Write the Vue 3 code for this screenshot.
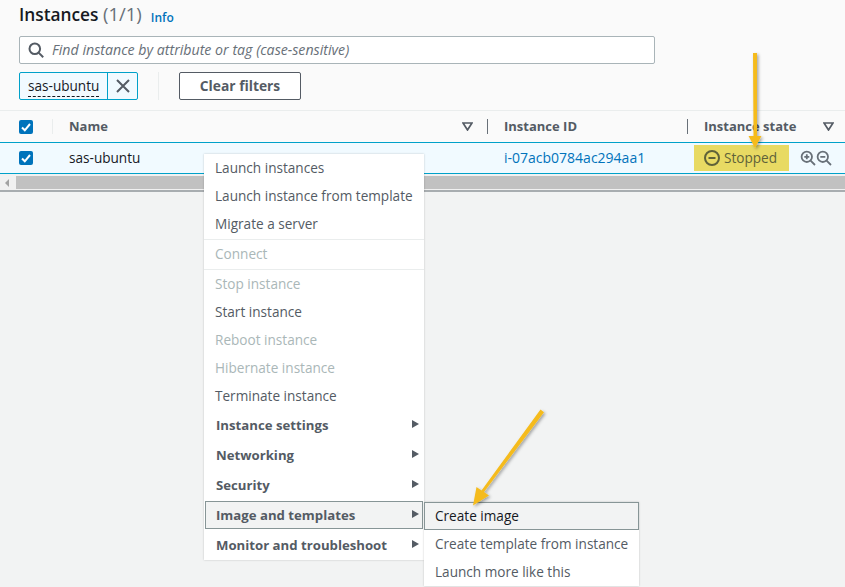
<script setup>
const groups = [
  [
    { label: 'Launch instances' },
    { label: 'Launch instance from template' },
    { label: 'Migrate a server' }
  ],
  [{ label: 'Connect', off: true }],
  [
    { label: 'Stop instance', off: true },
    { label: 'Start instance' },
    { label: 'Reboot instance', off: true },
    { label: 'Hibernate instance', off: true },
    { label: 'Terminate instance' }
  ]
]
const subMenus = [
  { label: 'Instance settings' },
  { label: 'Networking' },
  { label: 'Security' },
  { label: 'Image and templates', open: true },
  { label: 'Monitor and troubleshoot' }
]
const flyout = [
  { label: 'Create image', active: true },
  { label: 'Create template from instance' },
  { label: 'Launch more like this' }
]
</script>

<template>
  <div class="page">
    <header class="top">
      <div class="title-row">
        <h1>Instances <span class="count">(1/1)</span></h1>
        <a class="info">Info</a>
      </div>
      <div class="search">
        <svg class="search-icon" width="16" height="16" viewBox="0 0 16 16" fill="none" stroke="#545b64" stroke-width="2">
          <circle cx="6.800" cy="6.800" r="5.300" />
          <path d="M10.600 10.600l4.600 4.600" />
        </svg>
        <span class="search-text">Find instance by attribute or tag (case-sensitive)</span>
      </div>
      <div class="filter-row">
        <div class="chip">
          <span class="chip-text"><span>sas-ubuntu</span></span>
          <span class="chip-x">
            <svg width="14" height="14" viewBox="0 0 14 14" stroke="#545b64" stroke-width="2" fill="none">
              <path d="M1 1l12 12M13 1L1 13" />
            </svg>
          </span>
        </div>
        <span class="filter-sep"></span>
        <button class="clear" type="button">Clear filters</button>
      </div>
    </header>

    <div class="thead">
      <span class="cell-check">
        <span class="check">
          <svg width="14" height="14" viewBox="0 0 14 14" fill="none" stroke="#fff" stroke-width="2"><path d="M3 7.500l2.800 2.800L11 4" /></svg>
        </span>
      </span>
      <span class="cell-name with-sep-light">Name</span>
      <span class="sort"><svg width="11" height="9" viewBox="0 0 11 9"><path d="M1 1h9L5.500 8z" fill="none" stroke="#545b64" stroke-width="1.700" /></svg></span>
      <span class="cell-id with-sep">Instance ID</span>
      <span class="cell-state with-sep">Instance state</span>
      <span class="sort"><svg width="11" height="9" viewBox="0 0 11 9"><path d="M1 1h9L5.500 8z" fill="none" stroke="#545b64" stroke-width="1.700" /></svg></span>
    </div>

    <div class="trow">
      <span class="cell-check">
        <span class="check">
          <svg width="14" height="14" viewBox="0 0 14 14" fill="none" stroke="#fff" stroke-width="2"><path d="M3 7.500l2.800 2.800L11 4" /></svg>
        </span>
      </span>
      <span class="cell-name row-text">sas-ubuntu</span>
      <span class="cell-id row-text"><a>i-07acb0784ac294aa1</a></span>
      <span class="cell-state">
        <span class="state">
          <svg width="16" height="16" viewBox="0 0 16 16" fill="none" stroke="#5f6239" stroke-width="2">
            <circle cx="8" cy="8" r="7" />
            <path d="M4.500 8h7" />
          </svg>
          <span class="row-text">Stopped</span>
        </span>
        <span class="zooms">
          <svg width="16" height="16" viewBox="0 0 16 16" fill="none" stroke="#687078" stroke-width="1.800">
            <circle cx="6.800" cy="6.800" r="5.200" />
            <path d="M10.600 10.600l4.400 4.400M4.300 6.800h5M6.800 4.300v5" />
          </svg>
          <svg width="16" height="16" viewBox="0 0 16 16" fill="none" stroke="#687078" stroke-width="1.800">
            <circle cx="6.800" cy="6.800" r="5.200" />
            <path d="M10.600 10.600l4.400 4.400M4.300 6.800h5" />
          </svg>
        </span>
      </span>
    </div>

    <div class="scrollbar">
      <span class="scroll-arrow"></span>
      <span class="scroll-thumb"></span>
    </div>
    <div class="bottom"></div>

    <nav class="menu">
      <div v-for="(group, i) in groups" :key="i" class="menu-group">
        <div v-for="item in group" :key="item.label" class="menu-item" :class="{ off: item.off }">{{ item.label }}</div>
      </div>
      <div class="sub-list">
        <div v-for="item in subMenus" :key="item.label" class="sub-item" :class="{ open: item.open }">
          {{ item.label }}
          <span class="sub-arrow"></span>
        </div>
      </div>
    </nav>

    <nav class="flyout">
      <div v-for="item in flyout" :key="item.label" class="fly-item" :class="{ active: item.active }">{{ item.label }}</div>
    </nav>

    <!-- annotation arrows -->
    <svg class="arrows" width="845" height="587" viewBox="0 0 845 587">
      <defs>
        <filter id="arrow-shadow" x="-50%" y="-50%" width="200%" height="200%">
          <feDropShadow dx="1.500" dy="1.500" stdDeviation="1.500" flood-color="#000" flood-opacity="0.350" />
        </filter>
      </defs>
      <g filter="url(#arrow-shadow)" fill="#f5bb1c" stroke="none">
        <path d="M753 53h4v83h4.500l-6.500 12-6.500-12h5z" />
        <path d="M540.500 409.500l3.500 2.800-60 79.700 5 3.500-16 10 3.500-18.500 5 3.500z" />
      </g>
    </svg>
  </div>
</template>

<style scoped>
.page {
  position: relative;
  width: 845px;
  height: 587px;
  overflow: hidden;
  display: flex;
  flex-direction: column;
  background: #f2f3f3;
  font-family: "Open Sans", "Noto Sans", sans-serif;
  font-size: 13.600px;
  color: #16191f;
}

.top {
  height: 110px;
  box-sizing: border-box;
  background: #fafafa;
  padding: 0 190px 10px 19px;
}

.title-row {
  height: 26px;
  display: flex;
  align-items: center;
  gap: 9px;
}

h1 {
  margin: 0;
  font-size: 17.300px;
  font-weight: 600;
  white-space: nowrap;
}

.count {
  font-size: 18.500px;
  font-weight: 400;
  color: #687078;
}

.info {
  font-size: 12px;
  font-weight: 600;
  color: #0073bb;
  padding-top: 8px;
}

.search {
  margin-top: 10px;
  height: 28px;
  box-sizing: border-box;
  display: flex;
  align-items: center;
  gap: 8px;
  padding-left: 8px;
  background: #fff;
  border: 1px solid #a9b4b8;
  border-radius: 2px;
  font-size: 14.200px;
  font-style: italic;
  color: #687078;
}

.search-icon {
  flex: none;
}

.search-text {
  padding-bottom: 2px;
}

.filter-row {
  margin-top: 8px;
  height: 28px;
  display: flex;
  align-items: center;
}

.chip {
  width: 119px;
  height: 28px;
  box-sizing: border-box;
  display: flex;
  background: #f1faff;
  border: 1px solid #00a1c9;
  border-radius: 2px;
}

.chip-text {
  width: 88px;
  box-sizing: border-box;
  padding-left: 8px;
  line-height: 26px;
  border-right: 1px solid #00a1c9;
  white-space: nowrap;
}

.chip-text span {
  border-bottom: 1px dashed #16191f;
  padding-bottom: 1px;
}

.chip-x {
  flex: 1;
  display: flex;
  align-items: center;
  justify-content: center;
}

.filter-sep {
  width: 1px;
  height: 28px;
  margin: 0 20px;
  background: #eaeded;
}

.clear {
  width: 122px;
  height: 28px;
  padding: 0 0 2px;
  background: #fff;
  border: 1px solid #545b64;
  border-radius: 2px;
  font-family: inherit;
  font-size: 13.800px;
  font-weight: 700;
  color: #545b64;
}

.thead,
.trow {
  display: flex;
  align-items: center;
  box-sizing: border-box;
}

.thead {
  height: 32px;
  background: #fafafa;
  border-top: 1px solid #eaeded;
  font-size: 13px;
  font-weight: 700;
  color: #545b64;
}

.trow {
  height: 32px;
  background: #f1faff;
  border-top: 1px solid #00a1c9;
  border-bottom: 1px solid #00a1c9;
}

.row-text {
  padding-bottom: 2px;
}

.cell-check {
  width: 52px;
  flex: none;
  padding-left: 19px;
  box-sizing: border-box;
  display: flex;
}

.check {
  width: 14px;
  height: 14px;
  background: #0073bb;
  border-radius: 2px;
  display: flex;
}

.cell-name {
  width: 435px;
  flex: none;
  box-sizing: border-box;
  padding-left: 17px;
}

.thead .cell-name {
  width: 409px;
  padding-left: 16px;
}

.sort {
  width: 26px;
  flex: none;
  display: flex;
  padding-left: 1px;
  box-sizing: border-box;
}

.thead .sort:last-child {
  padding-left: 0;
}

.cell-id {
  width: 200px;
  flex: none;
  box-sizing: border-box;
  padding-left: 17px;
  font-size: 14px;
}

.thead .cell-id {
  padding-left: 16px;
  font-size: 13px;
}

.cell-id a {
  color: #0073bb;
}

.cell-state {
  flex: none;
  box-sizing: border-box;
  padding-left: 7px;
  display: flex;
  align-items: center;
}

.thead .cell-state {
  width: 136px;
  padding-left: 16px;
}

.with-sep,
.with-sep-light {
  height: 15px;
  line-height: 15px;
  border-left: 1px solid #687078;
}

.with-sep-light {
  border-left-color: #eaeded;
}

.state {
  width: 95px;
  height: 26px;
  flex: none;
  display: flex;
  align-items: center;
  gap: 4px;
  padding-left: 10px;
  box-sizing: border-box;
  background: #e8da63;
  color: #5f6239;
}

.zooms {
  display: flex;
  margin-left: 11px;
}

.scrollbar {
  height: 16px;
  box-sizing: border-box;
  padding-top: 2px;
  padding-bottom: 1px;
  display: flex;
  align-items: center;
  background: #f1f1f1;
}

.scroll-arrow {
  width: 0;
  height: 0;
  margin-left: 5px;
  border: 4px solid transparent;
  border-left-width: 0;
  border-right: 4px solid #a3a3a3;
}

.scroll-thumb {
  flex: 1;
  height: 13px;
  margin-left: 7px;
  background: #c1c1c1;
}

.bottom {
  flex: 1;
  background: #f2f3f3;
  border-top: 2px solid #a8adb0;
}

.menu {
  position: absolute;
  left: 204px;
  top: 154px;
  width: 220px;
  background: #fff;
  box-shadow: 0 0 2px rgba(0, 0, 0, 0.2);
  color: #545b64;
}

.menu-group {
  border-bottom: 1px solid #eaeded;
  padding-bottom: 1px;
}

.menu-group:nth-child(3) {
  border-bottom: 0;
  padding-bottom: 0;
}

.menu-item {
  height: 28px;
  line-height: 28px;
  padding-left: 11px;
  white-space: nowrap;
}

.menu-item.off {
  color: #aab7b8;
}

.sub-item {
  position: relative;
  height: 30px;
  line-height: 28px;
  box-sizing: border-box;
  border: 1px solid transparent;
  padding-left: 11px;
  font-size: 13.200px;
  font-weight: 700;
  white-space: nowrap;
}

.sub-item.open {
  height: 28px;
  line-height: 26px;
  margin: 1px;
  padding-left: 10px;
  background: #f2f3f3;
  border-color: #879596;
}

.sub-arrow {
  position: absolute;
  right: 4px;
  top: 9px;
  width: 0;
  height: 0;
  border: 4px solid transparent;
  border-left: 7px solid #545b64;
  border-right: 0;
}

.sub-item.open .sub-arrow {
  right: 3px;
  top: 8px;
}

.flyout {
  position: absolute;
  left: 424px;
  top: 502px;
  width: 215px;
  background: #fff;
  box-shadow: 0 0 2px rgba(0, 0, 0, 0.2);
  color: #545b64;
}

.fly-item {
  height: 28px;
  line-height: 26px;
  box-sizing: border-box;
  border: 1px solid transparent;
  padding-left: 10px;
  white-space: nowrap;
}

.fly-item.active {
  background: #f2f3f3;
  border-color: #879596;
  color: #16191f;
}

.arrows {
  position: absolute;
  left: 0;
  top: 0;
  pointer-events: none;
}
</style>
